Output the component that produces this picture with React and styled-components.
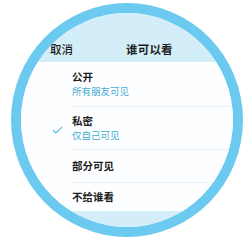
import React from "react";
import styled, { createGlobalStyle } from "styled-components";

const Global = createGlobalStyle`
  html, body { margin: 0; padding: 0; background: #ffffff; }
  body { font-family: "Noto Sans CJK SC", "Noto Sans", sans-serif; }
`;

const Page = styled.div`
  width: 250px;
  height: 240px;
  display: flex;
  padding: 3px 0 0 11px;
  box-sizing: border-box;
`;

const Lens = styled.div`
  width: 232px;
  height: 234px;
  box-sizing: border-box;
  border: 10px solid #6ccaf0;
  border-radius: 50%;
  overflow: hidden;
  display: flex;
  flex-direction: column;
  background: #fdfeff;
`;

const Header = styled.div`
  height: 49px;
  flex: none;
  background: #d4eef9;
  display: flex;
  align-items: flex-end;
  padding: 0 0 7px 29px;
  box-sizing: border-box;
  color: #1e1e1e;
  font-size: 11.5px;
  line-height: 12px;
`;

const Cancel = styled.span`
  font-weight: 500;
`;

const Title = styled.span`
  font-weight: 700;
  margin-left: 53px;
  letter-spacing: 0.2px;
`;

const List = styled.div`
  display: flex;
  flex-direction: column;
  background: #fdfeff;
`;

const Row = styled.div`
  display: flex;
  align-items: stretch;
`;

const CheckCell = styled.div`
  width: 51px;
  flex: none;
  display: flex;
  align-items: center;
  padding-left: 31px;
  padding-top: 2px;
  box-sizing: border-box;
`;

const Body = styled.div`
  flex: 1;
  display: flex;
  flex-direction: column;
  padding: ${(p) => p.$pad};
  border-bottom: ${(p) => (p.$last ? "none" : "1px solid #eef1f3")};
`;

const ItemTitle = styled.div`
  font-size: 10.5px;
  line-height: 14px;
  font-weight: 700;
  color: #1c1c1c;
`;

const ItemSub = styled.div`
  font-size: 9.5px;
  line-height: 14px;
  color: #44acd0;
`;

const Footer = styled.div`
  flex: 1;
  background: #d4eef9;
`;

const Check = () => (
  <svg width="11" height="8" viewBox="0 0 11 8">
    <path d="M0.8 4.2 L3.8 7 L10.2 0.8" fill="none" stroke="#5bb7d9" strokeWidth="1.1" />
  </svg>
);

const items = [
  { title: "公开", sub: "所有朋友可见", pad: "8px 0 8px" },
  { title: "私密", sub: "仅自己可见", pad: "7px 0 7px", checked: true },
  { title: "部分可见", pad: "9px 0 9px" },
  { title: "不给谁看", pad: "7px 0 7px", last: true },
];

export default function App() {
  return (
    <>
      <Global />
      <Page>
        <Lens>
          <Header>
            <Cancel>取消</Cancel>
            <Title>谁可以看</Title>
          </Header>
          <List>
            {items.map((it) => (
              <Row key={it.title}>
                <CheckCell>{it.checked && <Check />}</CheckCell>
                <Body $pad={it.pad} $last={it.last}>
                  <ItemTitle>{it.title}</ItemTitle>
                  {it.sub && <ItemSub>{it.sub}</ItemSub>}
                </Body>
              </Row>
            ))}
          </List>
          <Footer />
        </Lens>
      </Page>
    </>
  );
}
